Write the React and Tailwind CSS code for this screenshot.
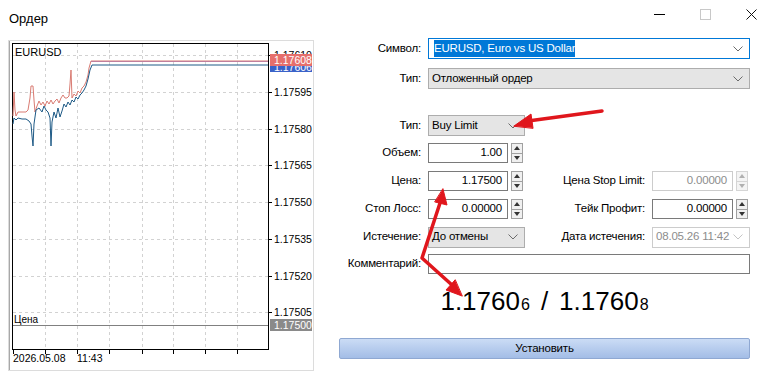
const FONT = { fontFamily: '"Liberation Sans", Arial, sans-serif' };

const red = [
  [13, 116], [14, 92], [15, 110], [16, 116], [18, 112], [22, 112], [26, 112], [28, 110],
  [30, 98], [31, 86], [33, 86], [34, 100], [35, 112], [37, 106], [39, 101], [41, 105],
  [43, 102], [45, 106], [47, 101], [49, 104], [51, 100], [53, 104], [55, 101], [57, 99],
  [59, 103], [61, 98], [63, 95], [65, 98], [67, 98], [69, 96], [70, 84], [71, 70],
  [72, 98], [74, 94], [76, 96], [78, 91], [80, 93], [82, 88], [84, 86], [86, 82],
  [88, 75], [89, 68], [91, 61], [268, 61],
];
const blue = [
  [13, 124], [14, 118], [16, 120], [18, 118], [22, 119], [26, 119], [29, 121], [31, 124],
  [32, 136], [33, 146], [34, 124], [36, 110], [39, 108], [42, 112], [44, 106], [46, 110],
  [48, 112], [50, 118], [51, 146], [52, 122], [54, 112], [56, 118], [58, 108], [60, 117],
  [62, 111], [64, 104], [66, 107], [68, 102], [70, 105], [72, 100], [74, 102], [76, 97],
  [78, 99], [80, 95], [82, 93], [84, 90], [86, 86], [88, 79], [90, 70], [92, 65], [268, 65],
];
const pts = (a) => a.map((p) => p.join(",")).join(" ");

const gridX = [45, 77, 109, 142, 173, 205, 237];
const prices = [
  [92, "1.17595"], [129, "1.17580"], [165, "1.17565"], [202, "1.17550"],
  [239, "1.17535"], [276, "1.17520"], [312, "1.17505"],
];

function Chart() {
  return (
    <svg width="307" height="332" viewBox="8 40 307 332" className="block" style={FONT}>
      <defs>
        <clipPath id="bidclip">
          <rect x="270" y="66" width="42" height="6" />
        </clipPath>
        <clipPath id="topclip">
          <rect x="270" y="44" width="42" height="10" />
        </clipPath>
      </defs>
      <rect x="8.5" y="40.5" width="305" height="330" fill="#fff" stroke="#dcdcdc" />
      <line x1="9.5" y1="41" x2="9.5" y2="370" stroke="#a8a8a8" />
      {gridX.map((x) => (
        <line key={x} x1={x + 0.5} y1="44" x2={x + 0.5} y2="349" stroke="#d2d2d2" strokeDasharray="3 3" />
      ))}
      {[55, ...prices.map((p) => p[0])].map((y) => (
        <line key={y} x1="13" y1={y + 0.5} x2="268" y2={y + 0.5} stroke="#d2d2d2" strokeDasharray="3 3" />
      ))}
      <rect x="12.5" y="43.5" width="256" height="306" fill="none" stroke="#000" />
      {[13, ...gridX].map((x) => (
        <line key={x} x1={x + 0.5} y1="350" x2={x + 0.5} y2="354" stroke="#000" />
      ))}
      {[55, ...prices.map((p) => p[0])].map((y) => (
        <line key={y} x1="269" y1={y + 0.5} x2="272" y2={y + 0.5} stroke="#000" />
      ))}
      <text x="274" y="59" fontSize="10.5" fill="#000" clipPath="url(#topclip)">1.17610</text>
      {prices.map(([y, t]) => (
        <text key={t} x="274" y={y + 4} fontSize="10.5" fill="#000">{t}</text>
      ))}
      <polyline points={pts(red)} fill="none" stroke="#d97b72" strokeWidth="1" />
      <polyline points={pts(blue)} fill="none" stroke="#1e5a86" strokeWidth="1" />
      <line x1="91" y1="61.5" x2="268" y2="61.5" stroke="#c07f9c" />
      <rect x="270" y="62" width="42" height="10" fill="#3a62c8" />
      <text x="274" y="71" fontSize="10.5" fill="#fff" clipPath="url(#bidclip)">1.17606</text>
      <rect x="270" y="54" width="42" height="12" fill="#e66f6c" />
      <text x="274" y="64" fontSize="10.5" fill="#fff">1.17608</text>
      <text x="15" y="56" fontSize="11" fill="#000">EURUSD</text>
      <text x="14" y="323" fontSize="10" fill="#000">Цена</text>
      <line x1="13" y1="325.5" x2="268" y2="325.5" stroke="#808080" />
      <rect x="270" y="319" width="42" height="12" fill="#8a8a8a" />
      <text x="274" y="329" fontSize="10.5" fill="#fff">1.17500</text>
      <text x="13" y="362" fontSize="10.5" fill="#000">2026.05.08</text>
      <text x="77" y="362" fontSize="10.5" fill="#000">11:43</text>
    </svg>
  );
}

function Chevron({ light }) {
  return (
    <svg width="10" height="6" viewBox="0 0 10 6" className="shrink-0">
      <path d="M0.5 0.5 L5 5 L9.5 0.5" fill="none" stroke={light ? "#c4c4c4" : "#6b6b6b"} strokeWidth="1" />
    </svg>
  );
}

function Spinner({ disabled }) {
  const c = disabled ? "#b0b0b0" : "#333";
  return (
    <div className={`ml-[3px] flex h-[20px] w-[12px] flex-col border ${disabled ? "border-[#d5d5d5] bg-[#f4f4f4]" : "border-[#a0a0a0] bg-[#f0f0f0]"}`}>
      <div className="flex flex-1 items-center justify-center">
        <svg width="6" height="4" viewBox="0 0 6 4"><path d="M0 4 L3 0 L6 4 Z" fill={c} /></svg>
      </div>
      <div className={`h-px ${disabled ? "bg-[#d5d5d5]" : "bg-[#a0a0a0]"}`} />
      <div className="flex flex-1 items-center justify-center">
        <svg width="6" height="4" viewBox="0 0 6 4"><path d="M0 0 L3 4 L6 0 Z" fill={c} /></svg>
      </div>
    </div>
  );
}

function Num({ value, disabled, w = "w-[80px]" }) {
  return (
    <div className="flex items-center">
      <div className={`flex h-[20px] ${w} items-center justify-end border pr-[5px] ${disabled ? "border-[#cccccc] text-[#8d8d8d]" : "border-[#7a7a7a] text-black"}`}>
        {value}
      </div>
      <Spinner disabled={disabled} />
    </div>
  );
}

function Select({ value, w, disabled }) {
  return (
    <div className={`flex h-[21px] ${w} items-center justify-between border pl-[3px] pr-[6px] ${disabled ? "border-[#cccccc] bg-white text-[#8d8d8d]" : "border-[#adadad] bg-[#e5e5e5] text-black"}`}>
      <span>{value}</span>
      <Chevron light={disabled} />
    </div>
  );
}

function Label({ children, w = "w-[89px]" }) {
  return <div className={`${w} shrink-0 pr-[7px] text-right text-black`}>{children}</div>;
}

function Row({ children, className = "" }) {
  return <div className={`flex h-[20px] items-center ${className}`}>{children}</div>;
}

function Arrows() {
  return (
    <svg className="pointer-events-none absolute left-0 top-0" width="776" height="386" viewBox="0 0 776 386">
      <g fill="#e0161c" stroke="#e0161c" strokeLinecap="round" strokeLinejoin="round">
        <path d="M602 111 L528 121" strokeWidth="3.5" fill="none" />
        <path d="M514 126 L531 114 L533 128 Z" strokeWidth="1" />
        <path d="M441 200 L422 258 L452 285" strokeWidth="3.5" fill="none" />
        <path d="M443 189 L447 205 L435 202 Z" strokeWidth="1" />
        <path d="M462 296 L446 290 L455 280 Z" strokeWidth="1" />
      </g>
    </svg>
  );
}

export default function App() {
  return (
    <div className="relative h-[386px] w-[776px] overflow-hidden bg-white" style={FONT}>
      <div className="flex h-[38px] items-start justify-between">
        <div className="pl-[9px] pt-[9px] text-[13px] text-black">Ордер</div>
        <div className="flex items-center pt-[9px]">
          <div className="flex h-[11px] w-[46px] items-center justify-center">
            <div className="h-px w-[11px] bg-black" />
          </div>
          <div className="flex h-[11px] w-[46px] items-center justify-center">
            <div className="h-[11px] w-[11px] border border-[#c8c8c8]" />
          </div>
          <div className="flex h-[11px] w-[46px] items-center justify-center">
            <svg width="11" height="11" viewBox="0 0 11 11">
              <path d="M0.5 0.5 L10.5 10.5 M10.5 0.5 L0.5 10.5" stroke="#111" strokeWidth="1" />
            </svg>
          </div>
          <div className="w-[2px]" />
        </div>
      </div>

      <div className="flex">
        <div className="ml-[8px] mt-[2px]">
          <Chart />
        </div>

        <div className="ml-[24px] flex w-[411px] flex-col text-[11.5px] tracking-[-0.2px]">
          <Row className="h-[21px]">
            <Label>Символ:</Label>
            <div className="flex h-[21px] flex-1 items-center justify-between border border-[#0078d7] bg-white pl-[5px] pr-[6px]">
              <span className="bg-[#0078d7] text-white">EURUSD, Euro vs US Dollar</span>
              <Chevron />
            </div>
          </Row>
          <Row className="mt-[9px] h-[21px]">
            <Label>Тип:</Label>
            <Select value="Отложенный ордер" w="flex-1" />
          </Row>

          <Row className="mt-[26px] h-[21px]">
            <Label>Тип:</Label>
            <Select value="Buy Limit" w="w-[97px]" />
          </Row>
          <Row className="mt-[7px]">
            <Label>Объем:</Label>
            <Num value="1.00" />
          </Row>
          <Row className="mt-[8px]">
            <Label>Цена:</Label>
            <Num value="1.17500" />
            <Label w="w-[129px]">Цена Stop Limit:</Label>
            <Num value="0.00000" w="w-[81px]" disabled />
          </Row>
          <Row className="mt-[8px]">
            <Label>Стоп Лосс:</Label>
            <Num value="0.00000" />
            <Label w="w-[129px]">Тейк Профит:</Label>
            <Num value="0.00000" w="w-[81px]" />
          </Row>
          <Row className="mt-[8px]">
            <Label>Истечение:</Label>
            <Select value="До отмены" w="w-[97px]" />
            <Label w="w-[127px]">Дата истечения:</Label>
            <Select value="08.05.26 11:42" w="w-[98px]" disabled />
          </Row>
          <Row className="mt-[7px]">
            <Label>Комментарий:</Label>
            <div className="h-[20px] flex-1 border border-[#7a7a7a] bg-white" />
          </Row>

          <div className="mt-[8px] flex h-[34px] items-baseline justify-center pt-[6px] tracking-normal text-black">
            <span className="text-[26px] leading-none">1.1760</span>
            <span className="pl-[1px] text-[16px] leading-none">6</span>
            <span className="px-[11px] text-[26px] leading-none">/</span>
            <span className="text-[26px] leading-none">1.1760</span>
            <span className="pl-[1px] text-[16px] leading-none">8</span>
          </div>

          <button className="mt-[22px] h-[21px] w-[411px] rounded-[2px] border border-[#8fa8d2] bg-gradient-to-b from-[#cbdcf5] to-[#a3bde6] text-black">
            Установить
          </button>
        </div>
      </div>

      <Arrows />
    </div>
  );
}
